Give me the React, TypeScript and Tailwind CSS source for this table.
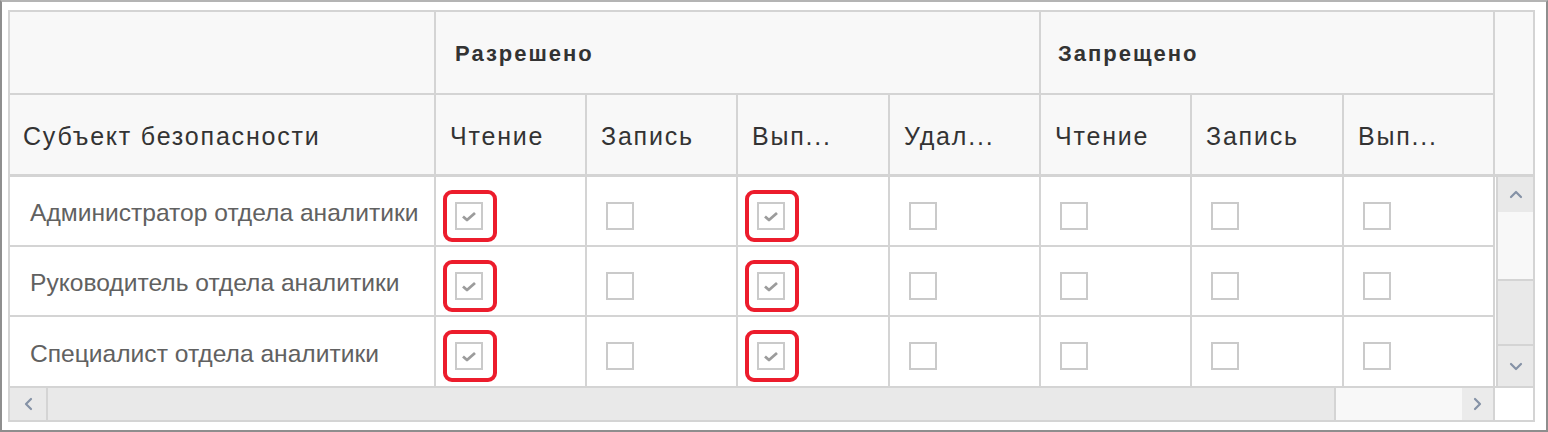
import React from 'react';

const FONT = { fontFamily: '"Liberation Sans", Arial, sans-serif' };

// widths include the 2px right divider
const COL_WIDTHS = ['w-[151px]', 'w-[151px]', 'w-[152px]', 'w-[151px]', 'w-[151px]', 'w-[152px]', 'w-[151px]'];
const SUB_HEADERS = ['Чтение', 'Запись', 'Вып...', 'Удал...', 'Чтение', 'Запись', 'Вып...'];

const SUBJECTS = [
  'Администратор отдела аналитики',
  'Руководитель отдела аналитики',
  'Специалист отдела аналитики',
];

// columns 0 (read) and 2 (execute) are granted and highlighted
const CHECKED = [0, 2];

function Chevron({ dir }: { dir: 'up' | 'down' | 'left' | 'right' }) {
  const paths = {
    up: 'M2 8 L7 3 L12 8',
    down: 'M2 3 L7 8 L12 3',
    left: 'M8 2 L3 7 L8 12',
    right: 'M3 2 L8 7 L3 12',
  };
  const vertical = dir === 'up' || dir === 'down';
  return (
    <svg width={vertical ? 14 : 11} height={vertical ? 11 : 14} viewBox={vertical ? '0 0 14 11' : '0 0 11 14'}>
      <path d={paths[dir]} fill="none" stroke="#8592a6" strokeWidth="2.2" strokeLinecap="round" strokeLinejoin="round" />
    </svg>
  );
}

function Checkbox({ checked }: { checked: boolean }) {
  return (
    <div className="relative w-[28px] h-[28px] border-2 border-[#cacaca] bg-white flex items-center justify-center">
      {checked && (
        <>
          <svg width="16" height="12" viewBox="0 0 16 12">
            <path d="M2 6.5 L6 10 L14 3" fill="none" stroke="#9c9c9c" strokeWidth="2.8" strokeLinejoin="round" />
          </svg>
          {/* red highlight frame around granted permissions */}
          <div className="absolute -left-[14px] -top-[14px] w-[54px] h-[52px] border-4 border-[#ec1c2c] rounded-[9px]" />
        </>
      )}
    </div>
  );
}

export default function App() {
  return (
    <div
      className="w-[1548px] h-[432px] bg-white border-2 border-[#8e8e8e] border-t-[#b4b4b4] pt-[8px] pl-[6px]"
      style={FONT}
    >
      <div className="w-[1527px] h-[412px] border-2 border-[#d4d4d4] flex flex-col">
        {/* header */}
        <div className="flex h-[165px] shrink-0 bg-[#f8f8f8] border-b-[3px] border-[#d4d4d4]">
          <div className="flex flex-col w-[1485px]">
            <div className="flex h-[83px] border-b-2 border-[#d4d4d4]">
              <div className="w-[426px] border-r-2 border-[#d4d4d4]" />
              <div className="w-[605px] border-r-2 border-[#d4d4d4] pl-[19px] pt-[2px] flex items-center text-[22px] font-bold tracking-[2px] text-[#333]">
                Разрешено
              </div>
              <div className="w-[454px] border-r-2 border-[#d4d4d4] pl-[17px] pt-[2px] flex items-center text-[22px] font-bold tracking-[2px] text-[#333]">
                Запрещено
              </div>
            </div>
            <div className="flex flex-1">
              <div className="w-[426px] border-r-2 border-[#d4d4d4] pl-[13px] pt-[5px] flex items-center text-[25px] tracking-[1.8px] text-[#333]">
                Субъект безопасности
              </div>
              {SUB_HEADERS.map((h, i) => (
                <div
                  key={i}
                  className={`${COL_WIDTHS[i]} border-r-2 border-[#d4d4d4] pl-[14px] pt-[5px] flex items-center text-[25px] tracking-[1.8px] text-[#333]`}
                >
                  {h}
                </div>
              ))}
            </div>
          </div>
          <div className="w-[38px]" />
        </div>

        {/* body */}
        <div className="flex h-[211px] shrink-0 border-b-2 border-[#d4d4d4]">
          <div className="flex flex-col w-[1485px]">
            {SUBJECTS.map((s, r) => (
              <div key={s} className={`flex ${r < 2 ? 'h-[70px] border-b-2 border-[#d4d4d4]' : 'flex-1'}`}>
                <div className="w-[426px] border-r-2 border-[#d4d4d4] pl-[20px] pt-[5px] flex items-center text-[24.6px] text-[#616161]">
                  {s}
                </div>
                {COL_WIDTHS.map((w, i) => (
                  <div key={i} className={`${w} border-r-2 border-[#d4d4d4] pl-[19px] pt-[25px]`}>
                    <Checkbox checked={CHECKED.includes(i)} />
                  </div>
                ))}
              </div>
            ))}
          </div>
          {/* vertical scrollbar */}
          <div className="w-[38px] ml-[1px] border-l-2 border-[#d4d4d4] flex flex-col">
            <div className="h-[35px] bg-[#e9e9e9] flex items-center justify-center">
              <Chevron dir="up" />
            </div>
            <div className="h-[69px] bg-[#f8f8f8] border-b-2 border-[#d4d4d4]" />
            <div className="h-[65px] bg-[#e9e9e9] border-b-2 border-[#d4d4d4]" />
            <div className="flex-1 bg-[#e9e9e9] flex items-center justify-center">
              <Chevron dir="down" />
            </div>
          </div>
        </div>

        {/* horizontal scrollbar */}
        <div className="flex flex-1">
          <div className="w-[38px] bg-[#e9e9e9] border-r-2 border-[#d4d4d4] flex items-center justify-center">
            <Chevron dir="left" />
          </div>
          <div className="w-[1288px] bg-[#e9e9e9] border-r-2 border-[#d4d4d4]" />
          <div className="w-[126px] bg-[#f8f8f8]" />
          <div className="w-[33px] bg-[#ebebeb] border-r-2 border-[#d4d4d4] flex items-center justify-center">
            <Chevron dir="right" />
          </div>
          <div className="flex-1 bg-white" />
        </div>
      </div>
    </div>
  );
}
